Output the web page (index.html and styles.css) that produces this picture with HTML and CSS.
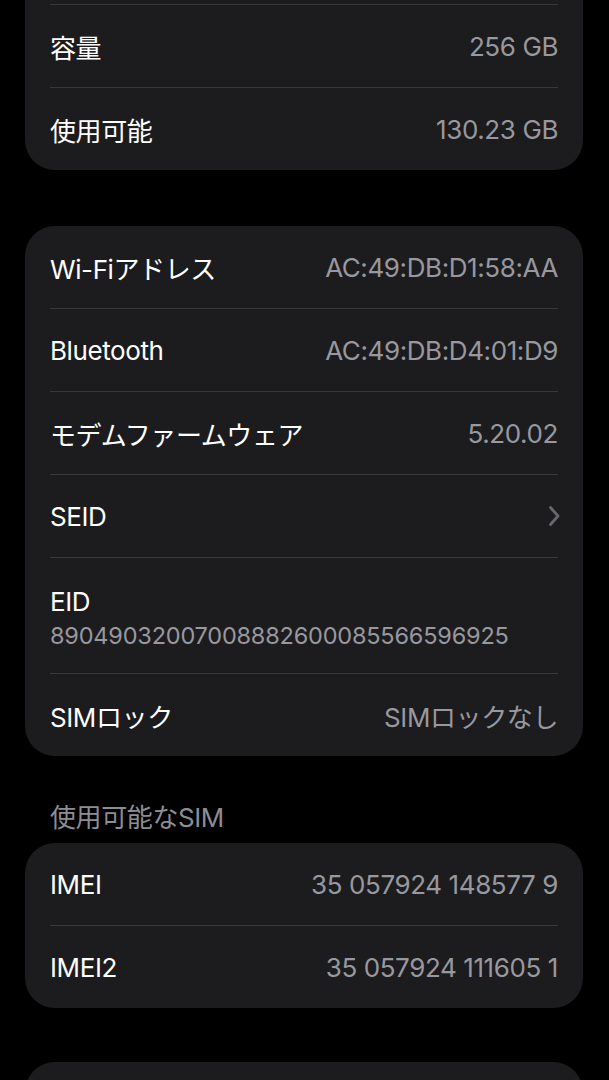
FILE: index.html
```html
<!DOCTYPE html>
<html lang="ja">
<head>
  <meta charset="UTF-8">
  <meta name="viewport" content="width=device-width, initial-scale=1.0">
  <title>情報</title>
  <link rel="stylesheet" href="styles.css">
</head>
<body>
  <main class="page">
    <section class="group">
      <div class="row" aria-hidden="true"></div>
      <div class="row">
        <span class="label">容量</span>
        <span class="value">256 GB</span>
      </div>
      <div class="row">
        <span class="label">使用可能</span>
        <span class="value">130.23 GB</span>
      </div>
    </section>

    <section class="group">
      <div class="row">
        <span class="label">Wi-Fiアドレス</span>
        <span class="value">AC:49:DB:D1:58:AA</span>
      </div>
      <div class="row">
        <span class="label">Bluetooth</span>
        <span class="value">AC:49:DB:D4:01:D9</span>
      </div>
      <div class="row">
        <span class="label">モデムファームウェア</span>
        <span class="value">5.20.02</span>
      </div>
      <div class="row">
        <span class="label">SEID</span>
        <svg class="chevron" width="12" height="20" viewBox="0 0 12 20">
          <path d="M2.5 1.5 L10 10 L2.5 18.5" fill="none" stroke="#67676c" stroke-width="2.8" stroke-linecap="round" stroke-linejoin="round"/>
        </svg>
      </div>
      <div class="row row-stack">
        <span class="label">EID</span>
        <span class="value sub">89049032007008882600085566596925</span>
      </div>
      <div class="row">
        <span class="label">SIMロック</span>
        <span class="value">SIMロックなし</span>
      </div>
    </section>

    <h2 class="group-title">使用可能なSIM</h2>
    <section class="group group-titled">
      <div class="row">
        <span class="label">IMEI</span>
        <span class="value">35 057924 148577 9</span>
      </div>
      <div class="row">
        <span class="label">IMEI2</span>
        <span class="value">35 057924 111605 1</span>
      </div>
    </section>

    <section class="group">
      <div class="row" aria-hidden="true"></div>
    </section>
  </main>
</body>
</html>
```

FILE: styles.css
```css
body {
  margin: 0;
  background-color: #000;
  font-family: 'Inter', 'Noto Sans CJK JP', sans-serif;
  color: #fff;
  overflow: hidden;
}

/* scrolled: the row above 容量 sits off the top */
.page {
  margin-top: -78px;
  padding: 0 26px 0 25px;
}

.group {
  background-color: #1c1c1e;
  border-radius: 30px;
  padding: 0 25px;
  margin-bottom: 56px;
}

.group-titled {
  margin-bottom: 54px;
}

.row {
  display: flex;
  justify-content: space-between;
  align-items: center;
  height: 82px;
  font-size: 26px;
  letter-spacing: -0.4px;
}

.row + .row {
  border-top: 1px solid #38383a;
}

.label {
  color: #fff;
}

.value {
  color: #98989e;
}

.row-stack {
  flex-direction: column;
  align-items: flex-start;
  justify-content: center;
  height: 116px;
  padding-top: 6px;
  box-sizing: border-box;
}

.row-stack .label {
  line-height: 33px;
}

.value.sub {
  font-size: 23.5px;
  line-height: 35px;
  letter-spacing: -0.2px;
}

.chevron {
  display: block;
  margin-right: -2px;
}

.group-title {
  margin: -9px 0 0;
  padding: 0 0 10px 25px;
  font-size: 26px;
  font-weight: 400;
  line-height: 30px;
  color: #8d8d93;
  letter-spacing: -0.4px;
}
```
